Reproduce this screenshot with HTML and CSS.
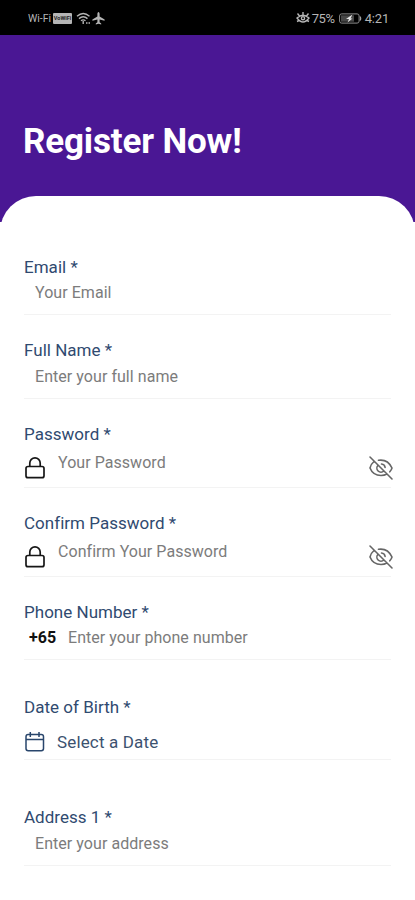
FILE: index.html
```html
<!DOCTYPE html>
<html lang="en">
<head>
<meta charset="utf-8">
<title>Register</title>
<link rel="stylesheet" href="styles.css">
</head>
<body>
<div class="status">
  <div class="status-left">
    <span class="wifi-text">Wi-Fi</span>
    <span class="badge">VoWiFi</span>
    <svg width="15" height="13" viewBox="0 0 15 13" fill="none" stroke="#b5b5b5" stroke-width="1.4"><path d="M1 4.2Q7.2-1.2 13.5 4.2M3 6.6Q7.2 3 11.5 6.6M5 8.7Q7.2 7 9.5 8.7"/><path d="M7.2 9v3M10 11h1.5M12.5 11H14"/></svg>
    <svg width="13" height="13" viewBox="0 0 13 13" fill="#b5b5b5"><path d="M6.5 0C7.2 0 7.6 1 7.6 2v2.4l5 3.1v1.3L7.6 7.5v2.8l1.6 1.2v1.1l-2.7-.8-2.7.8v-1.1l1.6-1.2V7.5L.4 8.8V7.5l5-3.1V2c0-1 .4-2 1.1-2z"/></svg>
  </div>
  <div class="status-right">
    <svg width="14" height="12" viewBox="0 0 14 12" fill="none" stroke="#b5b5b5" stroke-width="1.4"><path d="M1 6Q7 .5 13 6Q7 14 1 6zM7 3V0M3.5 4L1.5 1.5M10.5 4l2-2.5M1 9.5l2-1M13 9.5l-2-1"/><circle cx="7" cy="6.2" r="1.6"/></svg>
    <span class="percent">75%</span>
    <svg class="battery" width="23" height="11" viewBox="0 0 23 11"><rect x=".6" y=".9" width="19.5" height="9.2" rx="2" fill="none" stroke="#8f8f8f" stroke-width="1"/><path d="M2 2.3h13v6.4H2z" fill="#474747"/><path d="M21 3.5q1.4 2 0 4" fill="none" stroke="#a5a5a5" stroke-width="1.2"/><path d="M13.5 1.5L7 6h3L8.5 9.5l5-4h-2z" fill="#e5e5e5"/></svg>
    <span class="clock">4:21</span>
  </div>
</div>
<header class="hero"><h1>Register Now!</h1></header>
<main class="sheet">
  <div class="field">
    <div class="label">Email *</div>
    <div class="row indent"><span>Your Email</span></div>
  </div>
  <div class="field name">
    <div class="label">Full Name *</div>
    <div class="row indent"><span>Enter your full name</span></div>
  </div>
  <div class="field secret">
    <div class="label">Password *</div>
    <div class="row">
      <svg class="lock" width="22" height="24" viewBox="0 0 22 24"><rect x="2" y="10.5" width="18" height="11.2" rx="2"/><path d="M5.8 10.5V7a5.2 5.2 0 0 1 10.4 0v3.5"/></svg>
      <span>Your Password</span>
      <svg class="eye" width="26" height="26" viewBox="0 0 26 26"><path d="M2 2l22 22M6 6.5C3.8 8.3 2.5 10.7 2 13c2 5 6 7.5 11 7.5 2.2 0 4.2-.5 5.8-1.5M10.5 5.3c6-.9 11 2.4 13.5 7.7-.5 1.5-1.2 2.7-2.2 3.8M10.1 10.2a4.1 4.1 0 0 0 5.8 5.8M13.5 9c2 .2 3.4 1.6 3.6 3.5"/></svg>
    </div>
  </div>
  <div class="field secret">
    <div class="label">Confirm Password *</div>
    <div class="row">
      <svg class="lock" width="22" height="24" viewBox="0 0 22 24"><rect x="2" y="10.5" width="18" height="11.2" rx="2"/><path d="M5.8 10.5V7a5.2 5.2 0 0 1 10.4 0v3.5"/></svg>
      <span>Confirm Your Password</span>
      <svg class="eye" width="26" height="26" viewBox="0 0 26 26"><path d="M2 2l22 22M6 6.5C3.8 8.3 2.5 10.7 2 13c2 5 6 7.5 11 7.5 2.2 0 4.2-.5 5.8-1.5M10.5 5.3c6-.9 11 2.4 13.5 7.7-.5 1.5-1.2 2.7-2.2 3.8M10.1 10.2a4.1 4.1 0 0 0 5.8 5.8M13.5 9c2 .2 3.4 1.6 3.6 3.5"/></svg>
    </div>
  </div>
  <div class="field">
    <div class="label">Phone Number *</div>
    <div class="row phone"><b>+65</b><span>Enter your phone number</span></div>
  </div>
  <div class="field date">
    <div class="label">Date of Birth *</div>
    <div class="row">
      <svg class="calendar" width="22" height="22" viewBox="0 0 22 22"><rect x="2" y="3.5" width="17.5" height="16.3" rx="2.2"/><path d="M2 8.6h17.5M6.3 1v5M15 1v5"/></svg>
      <span>Select a Date</span>
    </div>
  </div>
  <div class="field address">
    <div class="label">Address 1 *</div>
    <div class="row indent"><span>Enter your address</span></div>
  </div>
</main>
</body>
</html>
```
FILE: styles.css
```css
* { box-sizing: border-box; }
body { margin: 0; height: 900px; overflow: hidden; background: #fff; font-family: Roboto, "Liberation Sans", sans-serif; }
svg { display: block; flex: none; }
.status { height: 35px; padding: 1px 26px 0 28px; background: #000; color: #b5b5b5; display: flex; justify-content: space-between; align-items: center; }
.status-left, .status-right { display: flex; align-items: center; }
.wifi-text { width: 25px; font-size: 10.5px; white-space: nowrap; }
.badge { width: 19px; height: 11px; margin-right: 4px; border-radius: 1px; background: #b5b5b5; color: #222; font-size: 5.5px; font-weight: 700; line-height: 11px; text-align: center; overflow: hidden; }
.status-left svg + svg { margin-left: 1px; }
.percent { margin-left: 2px; width: 27px; font-size: 13px; letter-spacing: -.4px; }
.clock { margin-left: 3px; font-size: 13px; letter-spacing: -.2px; }
.hero { height: 187px; padding: 86px 23px 0; background: #4a1794; }
h1 { margin: 0; color: #fff; font-size: 35px; line-height: 42px; font-weight: 700; letter-spacing: -.15px; white-space: nowrap; }
.sheet { position: relative; margin-top: -26px; height: 704px; padding: 61px 24px 0; border-radius: 36px 36px 0 0; background: #fff; }
.field { height: 58px; margin-bottom: 25px; border-bottom: 1px solid #f3f3f3; }
.name { height: 59px; }
.secret { height: 64px; }
.label { color: #304a70; font-size: 17px; line-height: 20px; letter-spacing: .02px; }
.row { display: flex; align-items: flex-start; margin-top: 6px; color: #7c7c7c; font-size: 16px; line-height: 20px; letter-spacing: .05px; }
.indent { padding-left: 11px; }
.secret .row { margin-top: 9px; }
.lock { margin: 3px 12px 0 0; fill: none; stroke: #171717; stroke-width: 1.7; }
.eye { margin: 2px -3px 0 auto; fill: none; stroke: #666; stroke-width: 1.6; stroke-linecap: round; }
.phone b { width: 39px; padding-left: 5px; flex: none; color: #111; font-size: 16px; font-weight: 700; }
.phone span { margin-left: 5px; }
.date { height: 63px; margin-top: 37px; }
.date .row { margin-top: 15px; color: #3c526f; font-size: 17px; letter-spacing: .15px; }
.calendar { margin: -1px 11px 0 0; fill: none; stroke: #29466c; stroke-width: 1.5; }
.address { height: 59px; margin-top: 47px; }
.name .row, .address .row { margin-top: 7px; }
```
